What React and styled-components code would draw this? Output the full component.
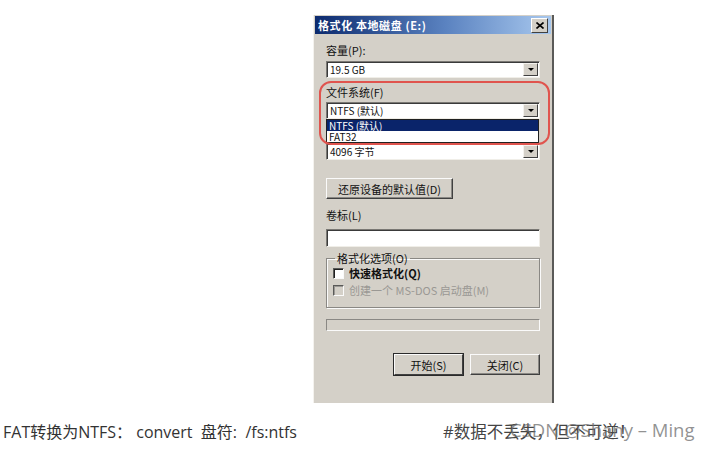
import React from "react";
import styled, { createGlobalStyle } from "styled-components";

const Global = createGlobalStyle`
  html, body { margin: 0; padding: 0; background: #fff; }
  body { font-family: "Noto Sans CJK SC", "Liberation Sans", sans-serif; }
`;

const Page = styled.div`
  width: 713px;
  height: 449px;
  display: flex;
  flex-direction: column;
  overflow: hidden;
`;

const Stage = styled.div`
  display: flex;
  padding: 15px 0 0 313px;
`;

const Dialog = styled.div`
  position: relative;
  width: 238px;
  background: #d4d0c8;
  border-left: 1px solid #f4f2ee;
  border-right: 2px solid #5a5a58;
  padding: 1px 0 28px 0;
  display: flex;
  flex-direction: column;
  font-size: 11px;
  color: #111;
`;

const TitleBar = styled.div`
  height: 18px;
  margin: 0 1px;
  background: linear-gradient(90deg, #0c2a6e 0%, #5a82c0 55%, #a8c8ee 100%);
  display: flex;
  align-items: center;
  justify-content: space-between;
  padding: 0 3px 0 3px;
`;

const Title = styled.span`
  color: #fff;
  font-weight: 700;
  font-size: 11px;
  letter-spacing: 0.6px;
  white-space: pre;
`;

const CloseBtn = styled.div`
  width: 15px;
  height: 13px;
  background: #d4d0c8;
  border: 1px solid;
  border-color: #fff #404040 #404040 #fff;
  display: flex;
  align-items: center;
  justify-content: center;
`;

const Body = styled.div`
  display: flex;
  flex-direction: column;
  padding: 0 12px 0 12px;
`;

const Label = styled.div`
  height: 14px;
  line-height: 14px;
  margin-top: ${(p) => p.$mt || 0}px;
  white-space: pre;
  color: #111;
  visibility: ${(p) => (p.$hidden ? "hidden" : "visible")};
`;

const ComboWrap = styled.div`
  position: relative;
  margin-top: ${(p) => p.$mt || 0}px;
`;

const Combo = styled.div`
  height: 17px;
  box-sizing: border-box;
  background: #fff;
  border: 1px solid;
  border-color: #7a7874 #f0eee8 #f0eee8 #7a7874;
  box-shadow: inset 1px 1px 0 #3a3a3a;
  display: flex;
  align-items: center;
  justify-content: space-between;
  padding-left: 3px;
  font-size: 10px;
  white-space: pre;
`;

const ArrowBtn = styled.div`
  width: 15px;
  height: 13px;
  margin-right: 1px;
  background: #d4d0c8;
  border: 1px solid;
  border-color: #f4f2ee #404040 #404040 #f4f2ee;
  box-sizing: border-box;
  display: flex;
  align-items: center;
  justify-content: center;
  &::after {
    content: "";
    border-left: 3px solid transparent;
    border-right: 3px solid transparent;
    border-top: 3px solid #000;
  }
`;

const DropList = styled.div`
  position: absolute;
  top: 100%;
  left: 0;
  right: 1px;
  background: #fff;
  border: 1px solid #202020;
  z-index: 3;
  display: flex;
  flex-direction: column;
  font-size: 10px;
`;

const Option = styled.div`
  height: 11px;
  line-height: 11px;
  padding-left: 2px;
  white-space: pre;
  background: ${(p) => (p.$selected ? "#0a246a" : "#fff")};
  color: ${(p) => (p.$selected ? "#fff" : "#111")};
`;

const Button = styled.div`
  align-self: ${(p) => p.$align || "auto"};
  margin-top: ${(p) => p.$mt || 0}px;
  width: ${(p) => p.$w}px;
  height: 21px;
  box-sizing: border-box;
  background: #d4d0c8;
  border: 1px solid;
  border-color: #fafafa #404040 #404040 #fafafa;
  box-shadow: ${(p) =>
    p.$default ? "0 0 0 1px #2a2a2a" : "inset -1px -1px 0 #8a8884"};
  display: flex;
  align-items: center;
  justify-content: center;
  white-space: pre;
`;

const TextInput = styled.div`
  margin-top: 7px;
  height: 18px;
  box-sizing: border-box;
  background: #fff;
  border: 1px solid;
  border-color: #7a7874 #f0eee8 #f0eee8 #7a7874;
  box-shadow: inset 1px 1px 0 #3a3a3a;
`;

const Group = styled.fieldset`
  margin: 5px 0 0 0;
  padding: 2px 6px 6px 6px;
  border: 1px solid #8a8884;
  box-shadow: 1px 1px 0 #fafafa, inset 1px 1px 0 #fafafa;
  display: flex;
  flex-direction: column;
  gap: 3px;
  min-width: 0;
  height: 56px;
  box-sizing: border-box;
`;

const Legend = styled.legend`
  padding: 0 2px;
  margin-left: 2px;
  font-size: 11px;
  line-height: 12px;
`;

const CheckRow = styled.div`
  display: flex;
  align-items: center;
  gap: 5px;
  height: 14px;
  white-space: pre;
  font-weight: ${(p) => (p.$disabled ? 400 : 600)};
  color: ${(p) => (p.$disabled ? "#9a9894" : "#111")};
`;

const Check = styled.div`
  width: 11px;
  height: 11px;
  box-sizing: border-box;
  background: ${(p) => (p.$disabled ? "#d4d0c8" : "#fff")};
  border: 1px solid;
  border-color: #5a5a58 #fafafa #fafafa #5a5a58;
  box-shadow: inset 1px 1px 0 ${(p) => (p.$disabled ? "#9a9894" : "#202020")};
`;

const Progress = styled.div`
  margin-top: 11px;
  height: 12px;
  box-sizing: border-box;
  border: 1px solid;
  border-color: #8a8884 #fafafa #fafafa #8a8884;
`;

const ButtonRow = styled.div`
  margin-top: 23px;
  display: flex;
  justify-content: flex-end;
  gap: 7px;
`;

const Highlight = styled.div`
  position: absolute;
  left: 5px;
  top: 66px;
  width: 231px;
  height: 64px;
  box-sizing: border-box;
  border: 2px solid #e0544e;
  border-radius: 12px;
  z-index: 4;
  pointer-events: none;
`;

const Caption = styled.div`
  margin-top: 17px;
  display: flex;
  align-items: center;
  padding-left: 3px;
  height: 22px;
  font-family: "Open Sans", "Noto Sans CJK SC", sans-serif;
  font-size: 16px;
  color: #333;
`;

const CaptionLeft = styled.span`
  white-space: pre;
  width: 440px;
`;

const CaptionRight = styled.span`
  position: relative;
  white-space: pre;
  color: #444;
  font-size: 16.5px;
`;

const Watermark = styled.span`
  position: absolute;
  left: 67px;
  top: -2px;
  font-family: "Open Sans", sans-serif;
  font-size: 18.5px;
  color: rgba(110, 110, 110, 0.75);
  white-space: pre;
`;

export default function App() {
  return (
    <Page>
      <Global />
      <Stage>
        <Dialog>
          <TitleBar>
            <Title>格式化 本地磁盘 (E:)</Title>
            <CloseBtn>
              <svg width="8" height="7" viewBox="0 0 8 7">
                <path d="M0.5 0.5 L7.5 6.5 M7.5 0.5 L0.5 6.5" stroke="#000" strokeWidth="1.6" />
              </svg>
            </CloseBtn>
          </TitleBar>
          <Body>
            <Label $mt={9}>容量(P):</Label>
            <ComboWrap $mt={4}>
              <Combo>
                19.5 GB
                <ArrowBtn />
              </Combo>
            </ComboWrap>
            <Label $mt={7}>文件系统(F)</Label>
            <ComboWrap $mt={3}>
              <Combo>
                NTFS (默认)
                <ArrowBtn />
              </Combo>
              <DropList>
                <Option $selected>NTFS (默认)</Option>
                <Option>FAT32</Option>
              </DropList>
            </ComboWrap>
            <Label $mt={7} $hidden aria-hidden="true">分配单元大小(A)</Label>
            <ComboWrap $mt={3}>
              <Combo>
                4096 字节
                <ArrowBtn />
              </Combo>
            </ComboWrap>
            <Button $mt={18} $w={127} $align="flex-start">
              还原设备的默认值(D)
            </Button>
            <Label $mt={9}>卷标(L)</Label>
            <TextInput />
            <Group>
              <Legend>格式化选项(O)</Legend>
              <CheckRow>
                <Check />
                快速格式化(Q)
              </CheckRow>
              <CheckRow $disabled>
                <Check $disabled />
                创建一个 MS-DOS 启动盘(M)
              </CheckRow>
            </Group>
            <Progress />
            <ButtonRow>
              <Button $w={69} $default>
                开始(S)
              </Button>
              <Button $w={70}>关闭(C)</Button>
            </ButtonRow>
          </Body>
          <Highlight />
        </Dialog>
      </Stage>
      <Caption>
        <CaptionLeft>FAT转换为NTFS： convert  盘符:  /fs:ntfs</CaptionLeft>
        <CaptionRight>
          #数据不丢失，但不可逆！
          <Watermark>CSDN @Shany – Ming</Watermark>
        </CaptionRight>
      </Caption>
    </Page>
  );
}
